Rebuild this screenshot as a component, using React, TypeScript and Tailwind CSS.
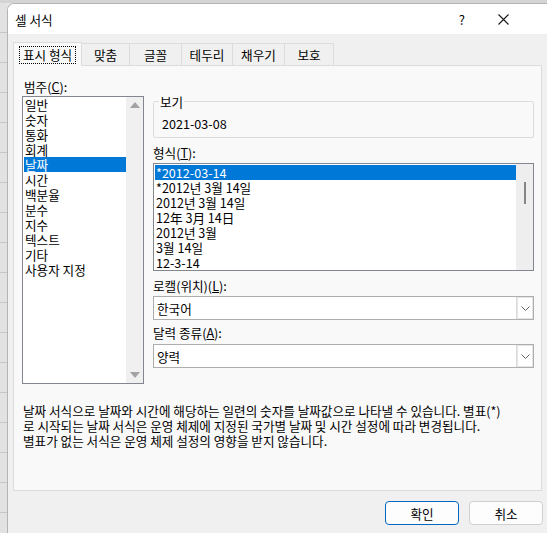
import React from 'react';

const categories = ['일반', '숫자', '통화', '회계', '날짜', '시간', '백분율', '분수', '지수', '텍스트', '기타', '사용자 지정'];
const formats = ['*2012-03-14', '*2012년 3월 14일', '2012년 3월 14일', '12年 3月 14日', '2012년 3월', '3월 14일', '12-3-14'];
const tabs = ['맞춤', '글꼴', '테두리', '채우기', '보호'];

function Chevron() {
  return (
    <svg width="9" height="5" viewBox="0 0 9 5" fill="none">
      <path d="M0.5 0.5 L4.5 4.5 L8.5 0.5" stroke="#606060" strokeWidth="1" />
    </svg>
  );
}

function Combo({ value }: { value: string }) {
  return (
    <div className="flex h-[24px] w-[381px] border border-[#adadad] bg-white">
      <div className="flex flex-1 items-center pl-[3px]">{value}</div>
      <div className="flex w-[17px] items-center justify-center border-l border-[#dcdcdc] bg-white shadow-[0_0_0_1px_#e5e5e5_inset]">
        <Chevron />
      </div>
    </div>
  );
}

export default function App() {
  return (
    <div
      className="flex h-[533px] w-[547px] flex-col overflow-hidden bg-[#e6e6e6] text-[12.6px] leading-[15px] text-black"
      style={{ fontFamily: '"Noto Sans CJK KR", "Noto Sans", sans-serif' }}
    >
      <div className="h-[3px] shrink-0 bg-[#d4d4d4]" />
      <div className="flex flex-1">
        {/* 시트 행 머리글 */}
        <div className="w-[7px] shrink-0 bg-[repeating-linear-gradient(to_bottom,#e2e2e2_0,#e2e2e2_29px,#c6c6c6_29px,#c6c6c6_30px)]" />

        {/* 대화 상자 */}
        <div className="flex flex-1 flex-col overflow-hidden rounded-tl-[7px] border-l border-t border-[#b4b4b4] bg-[#f0f0f0]">
          <div className="flex h-[30px] shrink-0 items-center bg-white pl-[7px]">
            <span className="flex-1 text-[12.6px]">셀 서식</span>
            <span className="mr-[33px] text-[13px]">?</span>
            <svg className="mr-[38px]" width="11" height="11" viewBox="0 0 11 11">
              <path d="M0.5 0.5 L10.5 10.5 M10.5 0.5 L0.5 10.5" stroke="#1a1a1a" strokeWidth="1.1" />
            </svg>
          </div>

          <div className="flex flex-1 flex-col pl-[5px] pt-[8px]">
            {/* 탭 */}
            <div className="flex h-[23px] items-end">
              <div className="relative z-10 -mb-px flex h-[24px] w-[69px] items-center justify-center border border-b-0 border-[#dcdcdc] bg-[#f9f9f9]">
                <span className="border border-dotted border-black px-[3px] leading-[16px]">표시 형식</span>
              </div>
              {tabs.map((t, i) => (
                <div
                  key={t}
                  className={`flex h-[22px] items-center justify-center border-t border-r border-[#dcdcdc] bg-[#f0f0f0] ${
                    ['w-[48px]', 'w-[52px]', 'w-[51px]', 'w-[52px]', 'w-[49px]'][i]
                  }`}
                >
                  {t}
                </div>
              ))}
            </div>

            {/* 탭 패널 */}
            <div className="flex h-[426px] w-[529px] flex-col border border-[#dcdcdc] bg-[#f9f9f9] pl-[8px] pt-[13px]">
              <div className="flex">
                {/* 범주 */}
                <div className="flex w-[131px] flex-col">
                  <div className="pl-[2px]">
                    범주(<span className="underline">C</span>):
                  </div>
                  <div className="mt-[2px] flex h-[288px] w-[122px] border border-[#828790] bg-white">
                    <div className="flex-1 pl-[1px]">
                      {categories.map((c) => (
                        <div key={c} className={`pl-[1px] ${c === '날짜' ? 'bg-[#0078d7] text-white' : ''}`}>
                          {c}
                        </div>
                      ))}
                    </div>
                    <div className="flex w-[17px] flex-col items-center justify-between bg-[#f0f0f0] py-[5px]">
                      <div className="h-0 w-0 border-x-[5px] border-b-[6px] border-x-transparent border-b-[#a3a3a3]" />
                      <div className="h-0 w-0 border-x-[5px] border-t-[6px] border-x-transparent border-t-[#a3a3a3]" />
                    </div>
                  </div>
                </div>

                {/* 오른쪽 */}
                <div className="flex w-[381px] flex-col pt-[22px]">
                  <div className="relative h-[37px] rounded-[2px] border border-[#dcdcdc]">
                    <span className="absolute -top-[8px] left-[5px] bg-[#f9f9f9] px-[1px]">보기</span>
                    <div className="pl-[8px] pt-[14px]">2021-03-08</div>
                  </div>
                  <div className="mt-[7px]">
                    형식(<span className="underline">T</span>):
                  </div>
                  <div className="mt-[3px] flex h-[108px] border border-[#828790] bg-white">
                    <div className="flex-1 pl-[1px] pt-[1px]">
                      {formats.map((f, i) => (
                        <div key={f} className={`pl-[1px] ${i === 0 ? 'bg-[#0078d7] text-white' : ''}`}>
                          {f}
                        </div>
                      ))}
                    </div>
                    <div className="flex w-[17px] justify-center bg-[#eeeeee] pt-[18px]">
                      <div className="h-[22px] w-[2px] bg-[#858585]" />
                    </div>
                  </div>
                  <div className="mt-[7px]">
                    로캘(위치)(<span className="underline">L</span>):
                  </div>
                  <div className="mt-[3px]">
                    <Combo value="한국어" />
                  </div>
                  <div className="mt-[5px]">
                    달력 종류(<span className="underline">A</span>):
                  </div>
                  <div className="mt-[4px]">
                    <Combo value="양력" />
                  </div>
                </div>
              </div>

              <p className="mt-[19px] w-[515px] pl-[1px]">
                날짜 서식으로 날짜와 시간에 해당하는 일련의 숫자를 날짜값으로 나타낼 수 있습니다. 별표(*)
                <br />로 시작되는 날짜 서식은 운영 체제에 지정된 국가별 날짜 및 시간 설정에 따라 변경됩니다.
                <br />
                별표가 없는 서식은 운영 체제 설정의 영향을 받지 않습니다.
              </p>
            </div>

            {/* 버튼 */}
            <div className="mt-[10px] flex gap-[10px] pl-[372px]">
              <button className="h-[24px] w-[74px] rounded-[4px] border border-[#0067c0] bg-[#fdfdfd]">
                확인
              </button>
              <button className="h-[24px] w-[74px] rounded-[4px] border border-[#cfcfcf] bg-[#fdfdfd]">
                취소
              </button>
            </div>
          </div>
        </div>
      </div>
    </div>
  );
}
